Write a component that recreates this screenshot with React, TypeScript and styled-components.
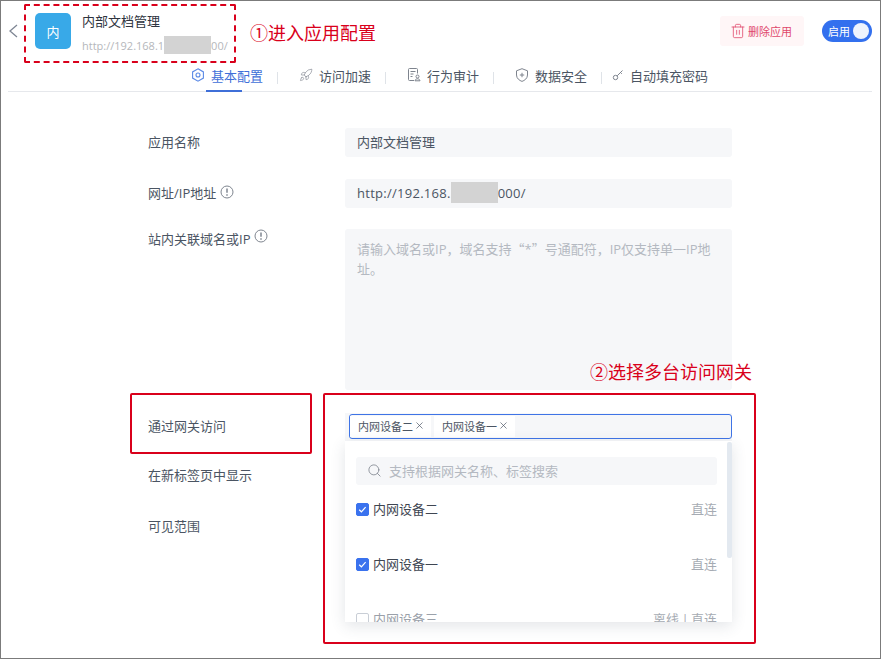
import React from 'react';
import styled, { createGlobalStyle } from 'styled-components';
import { Rocket, Search, Trash2, X } from 'lucide-react';

const GlobalStyle = createGlobalStyle`
  html, body {
    margin: 0;
    padding: 0;
    background: #fff;
  }
  * {
    box-sizing: border-box;
  }
`;

const fontStack = `"Open Sans", "Noto Sans CJK SC", sans-serif`;
const red = '#d9001b';

const Page = styled.div`
  position: relative;
  width: 881px;
  height: 659px;
  overflow: hidden;
  background: #fff;
  border: 1px solid #7b7b7b;
  font-family: ${fontStack};
  font-size: 13px;
  color: #4b5563;
`;

const Header = styled.div`
  display: flex;
  align-items: flex-start;
  height: 64px;
  padding: 12px 8px 0 7px;
`;

const BackButton = styled.div`
  display: flex;
  align-items: center;
  width: 27px;
  height: 36px;
`;

const Avatar = styled.div`
  display: flex;
  align-items: center;
  justify-content: center;
  width: 36px;
  height: 36px;
  margin-right: 11px;
  border-radius: 5px;
  background: #38a9e8;
  color: #fff;
  font-size: 13px;
`;

const AppInfo = styled.div`
  flex: 1;
  display: flex;
  flex-direction: column;
`;

const AppTitle = styled.div`
  height: 19px;
  line-height: 17px;
  font-size: 13px;
  color: #2e3440;
`;

const AppUrl = styled.div`
  display: flex;
  align-items: center;
  height: 26px;
  font-size: 11px;
  color: #b5b7bb;
`;

const Redact = styled.span<{ $width: number; $height: number }>`
  display: inline-block;
  flex: none;
  width: ${(p) => p.$width}px;
  height: ${(p) => p.$height}px;
  background: #d3d3d3;
`;

const DeleteButton = styled.div`
  display: flex;
  align-items: center;
  gap: 2px;
  height: 30px;
  margin: 3px 18px 0 0;
  padding: 0 12px 0 10px;
  border-radius: 3px;
  background: #fff6f7;
  color: #e0486b;
  font-size: 11px;
`;

const Toggle = styled.div`
  display: flex;
  align-items: center;
  justify-content: space-between;
  width: 50px;
  height: 22px;
  margin-top: 7px;
  padding: 0 3px 0 6px;
  border-radius: 11px;
  background: #3370ee;
  color: #fff;
  font-size: 11px;
`;

const ToggleKnob = styled.span`
  width: 16px;
  height: 16px;
  border-radius: 50%;
  background: #eef3fd;
`;

const Tabs = styled.div`
  display: flex;
  align-items: flex-start;
  height: 27px;
  margin: 0 8px 0 7px;
  padding-left: 182px;
  border-bottom: 1px solid #e6e8ec;
`;

const Tab = styled.div<{ $active?: boolean; $width: number; $indent: number }>`
  position: relative;
  display: flex;
  align-items: center;
  gap: 6px;
  width: ${(p) => p.$width}px;
  height: 20px;
  padding-left: ${(p) => p.$indent}px;
  color: ${(p) => (p.$active ? '#3f6fd8' : '#4b5563')};
  svg {
    color: ${(p) => (p.$active ? '#5b8ae6' : '#7e848e')};
    flex: none;
  }
`;

const TabLine = styled.span`
  position: absolute;
  left: 16px;
  top: 25px;
  width: 36px;
  height: 2px;
  background: #3f6fd8;
`;

const TabDivider = styled.span`
  flex: none;
  width: 1px;
  height: 12px;
  margin-top: 7px;
  background: #dfe3e8;
`;

const Form = styled.div`
  display: flex;
  flex-direction: column;
  padding: 36px 148px 0 147px;
`;

const Row = styled.div<{ $gap: number }>`
  display: grid;
  grid-template-columns: 197px 1fr;
  margin-bottom: ${(p) => p.$gap}px;
`;

const Label = styled.div<{ $top?: boolean }>`
  display: flex;
  align-items: ${(p) => (p.$top ? 'flex-start' : 'center')};
  gap: 4px;
  height: 28px;
  padding-bottom: ${(p) => (p.$top ? 0 : 2)}px;
  color: #4b5563;
  svg {
    flex: none;
  }
`;

const Field = styled.div<{ $spaced?: boolean }>`
  display: flex;
  align-items: center;
  height: 29px;
  padding: 0 12px 2px;
  border-radius: 3px;
  background: #f6f7f9;
  color: #4b5563;
  letter-spacing: ${(p) => (p.$spaced ? 0.27 : 0)}px;
`;

const TextArea = styled.div`
  height: 161px;
  padding: 10px 20px 10px 12px;
  border-radius: 3px;
  background: #f6f7f9;
  color: #b4b9c1;
  line-height: 20px;
`;

const CjkQuote = styled.span`
  font-family: "Noto Sans CJK SC", sans-serif;
`;

const SelectWrap = styled.div`
  height: 28px;
  margin-top: 1px;
  padding: 1px 0 2px 4px;
  background: #f6f7f9;
`;

const SelectBox = styled.div`
  display: flex;
  align-items: center;
  gap: 3px;
  height: 25px;
  padding: 0;
  border: 1px solid #3f74e6;
  border-radius: 3px;
`;

const Tag = styled.span`
  display: flex;
  align-items: center;
  gap: 1px;
  height: 21px;
  padding: 0 6px 2px 8px;
  background: #fff;
  color: #4b5563;
  font-size: 11px;
`;

const Dropdown = styled.div`
  position: absolute;
  left: 344px;
  top: 440px;
  width: 387px;
  height: 181px;
  overflow: hidden;
  background: #fff;
  box-shadow: 0 4px 14px rgba(60, 70, 90, 0.14);
`;

const DropdownList = styled.div`
  width: 382px;
  padding: 16px 10px 0 11px;
`;

const ScrollThumb = styled.div`
  position: absolute;
  top: 1px;
  right: 0;
  width: 5px;
  height: 116px;
  border-radius: 2px;
  background: #e3e9f0;
`;

const SearchBox = styled.div`
  display: flex;
  align-items: center;
  gap: 7px;
  height: 28px;
  padding: 0 11px 2px;
  border-radius: 3px;
  background: #f6f7f9;
  color: #b4b9c1;
  svg {
    color: #7e848e;
    flex: none;
  }
`;

const Option = styled.div`
  display: flex;
  align-items: flex-start;
  height: 55px;
  padding-top: 14px;
`;

const Check = styled.span<{ $on: boolean }>`
  display: flex;
  align-items: center;
  justify-content: center;
  flex: none;
  width: 13px;
  height: 13px;
  margin: 4px 4px 0 0;
  border-radius: 2px;
  border: 1px solid ${(p) => (p.$on ? '#3a72ee' : '#c9ced6')};
  background: ${(p) => (p.$on ? '#3a72ee' : '#fff')};
`;

const OptionName = styled.span<{ $muted?: boolean }>`
  flex: 1;
  color: ${(p) => (p.$muted ? '#9ba1aa' : '#3f4652')};
`;

const OptionStatus = styled.span`
  color: #a6abb3;
  word-spacing: -1px;
`;

const NoteBox = styled.div<{ $left: number; $top: number; $width: number; $height: number; $dashed?: boolean }>`
  position: absolute;
  left: ${(p) => p.$left}px;
  top: ${(p) => p.$top}px;
  width: ${(p) => p.$width}px;
  height: ${(p) => p.$height}px;
  border: 2px ${(p) => (p.$dashed ? 'dashed' : 'solid')} ${red};
  border-radius: 2px;
  pointer-events: none;
`;

const NoteText = styled.div<{ $left: number; $top: number }>`
  position: absolute;
  left: ${(p) => p.$left}px;
  top: ${(p) => p.$top}px;
  height: 24px;
  line-height: 24px;
  font-size: 18px;
  color: ${red};
  white-space: nowrap;
`;

const BackIcon = () => (
  <svg width="10" height="14" viewBox="0 0 10 14" fill="none" stroke="#7f8794" strokeWidth="1.3">
    <path d="M9 1L2 7l7 6" />
  </svg>
);

const HexIcon = () => (
  <svg width="14" height="14" viewBox="0 0 14 14" fill="none" stroke="currentColor" strokeWidth="1.100">
    <path d="M7 .8l5.4 3.1v6.2L7 13.2 1.6 10.100V3.900z" />
    <circle cx="7" cy="7" r="2" />
  </svg>
);

const AuditIcon = () => (
  <svg width="14" height="14" viewBox="0 0 14 14" fill="none" stroke="currentColor" strokeWidth="1">
    <path d="M7 12.500H2.500a1 1 0 0 1-1-1v-10a1 1 0 0 1 1-1h7a1 1 0 0 1 1 1v4" />
    <path d="M3.500 3.500h5M3.500 6h3M3.500 8.500h2" />
    <circle cx="10.500" cy="8.500" r="1.500" />
    <path d="M8 12.800c.2-1.300 1.200-2 2.500-2s2.300.7 2.500 2z" />
  </svg>
);

const ShieldIcon = () => (
  <svg width="14" height="14" viewBox="0 0 14 14" fill="none" stroke="currentColor" strokeWidth="1">
    <path d="M7 .7l5.500 2.100V7c0 3.500-3 5.500-5.500 6.400C4.500 12.500 1.500 10.500 1.500 7V2.800z" />
    <path d="M7 4.800v4.400M4.800 7h4.400" />
  </svg>
);

const KeyIcon = () => (
  <svg width="12" height="12" viewBox="0 0 12 12" fill="none" stroke="currentColor" strokeWidth="1">
    <circle cx="3.500" cy="8.500" r="2.200" />
    <path d="M5.200 6.800L10.500 1.500M8.500 3.500l1.300 1.300" />
  </svg>
);

const InfoIcon = () => (
  <svg width="14" height="14" viewBox="0 0 14 14" fill="none" stroke="#7f8690" strokeWidth="1">
    <circle cx="7" cy="7" r="6" />
    <path d="M7 3.500v4.200" strokeWidth="1.500" />
    <path d="M7 9.300v1.400" strokeWidth="1.500" />
  </svg>
);

const CheckMark = () => (
  <svg width="9" height="9" viewBox="0 0 9 9" fill="none" stroke="#fff" strokeWidth="1.200">
    <path d="M1.200 4.800l2.200 2 4.200-4.600" />
  </svg>
);

const options = [
  { name: '内网设备二', status: '直连', on: true },
  { name: '内网设备一', status: '直连', on: true },
  { name: '内网设备三', status: '离线 | 直连', on: false },
];

const App: React.FC = () => {
  return (
    <Page>
      <GlobalStyle />
      <Header>
        <BackButton>
          <BackIcon />
        </BackButton>
        <Avatar>内</Avatar>
        <AppInfo>
          <AppTitle>内部文档管理</AppTitle>
          <AppUrl>
            http://192.168.1
            <Redact $width={47} $height={18} />
            00/
          </AppUrl>
        </AppInfo>
        <DeleteButton>
          <Trash2 size={16} strokeWidth={1.2} />
          删除应用
        </DeleteButton>
        <Toggle>
          启用
          <ToggleKnob />
        </Toggle>
      </Header>
      <Tabs>
        <Tab $active $width={87} $indent={1}>
          <HexIcon />
          基本配置
          <TabLine />
        </Tab>
        <TabDivider />
        <Tab $width={107} $indent={21}>
          <Rocket size={14} strokeWidth={1.1} />
          访问加速
        </Tab>
        <TabDivider />
        <Tab $width={107} $indent={21}>
          <AuditIcon />
          行为审计
        </Tab>
        <TabDivider />
        <Tab $width={107} $indent={21}>
          <ShieldIcon />
          数据安全
        </Tab>
        <TabDivider />
        <Tab $width={110} $indent={10}>
          <KeyIcon />
          自动填充密码
        </Tab>
      </Tabs>
      <Form>
        <Row $gap={22}>
          <Label>应用名称</Label>
          <Field>内部文档管理</Field>
        </Row>
        <Row $gap={21}>
          <Label>
            网址/IP地址
            <InfoIcon />
          </Label>
          <Field $spaced>
            http://192.168.
            <Redact $width={47} $height={21} />
            000/
          </Field>
        </Row>
        <Row $gap={22}>
          <Label $top>
            站内关联域名或IP
            <InfoIcon />
          </Label>
          <TextArea>
            请输入域名或IP，域名支持<CjkQuote>“</CjkQuote>*<CjkQuote>”</CjkQuote>号通配符，IP仅支持单一IP地址。
          </TextArea>
        </Row>
        <Row $gap={20}>
          <Label>通过网关访问</Label>
          <SelectWrap>
            <SelectBox>
              <Tag>
                内网设备二
                <X size={11} strokeWidth={1.5} />
              </Tag>
              <Tag>
                内网设备一
                <X size={11} strokeWidth={1.5} />
              </Tag>
            </SelectBox>
          </SelectWrap>
        </Row>
        <Row $gap={23}>
          <Label>在新标签页中显示</Label>
          <div />
        </Row>
        <Row $gap={0}>
          <Label>可见范围</Label>
          <div />
        </Row>
      </Form>
      <Dropdown>
        <DropdownList>
          <SearchBox>
            <Search size={15} strokeWidth={1.3} />
            支持根据网关名称、标签搜索
          </SearchBox>
          {options.map((o) => (
            <Option key={o.name}>
              <Check $on={o.on}>{o.on && <CheckMark />}</Check>
              <OptionName $muted={!o.on}>{o.name}</OptionName>
              <OptionStatus>{o.status}</OptionStatus>
            </Option>
          ))}
        </DropdownList>
        <ScrollThumb />
      </Dropdown>
      <NoteBox $dashed $left={23} $top={3} $width={212} $height={59} />
      <NoteText $left={249} $top={20}>①进入应用配置</NoteText>
      <NoteBox $left={129} $top={392} $width={182} $height={61} />
      <NoteBox $left={322} $top={392} $width={433} $height={251} />
      <NoteText $left={589} $top={359}>②选择多台访问网关</NoteText>
    </Page>
  );
};

export default App;
